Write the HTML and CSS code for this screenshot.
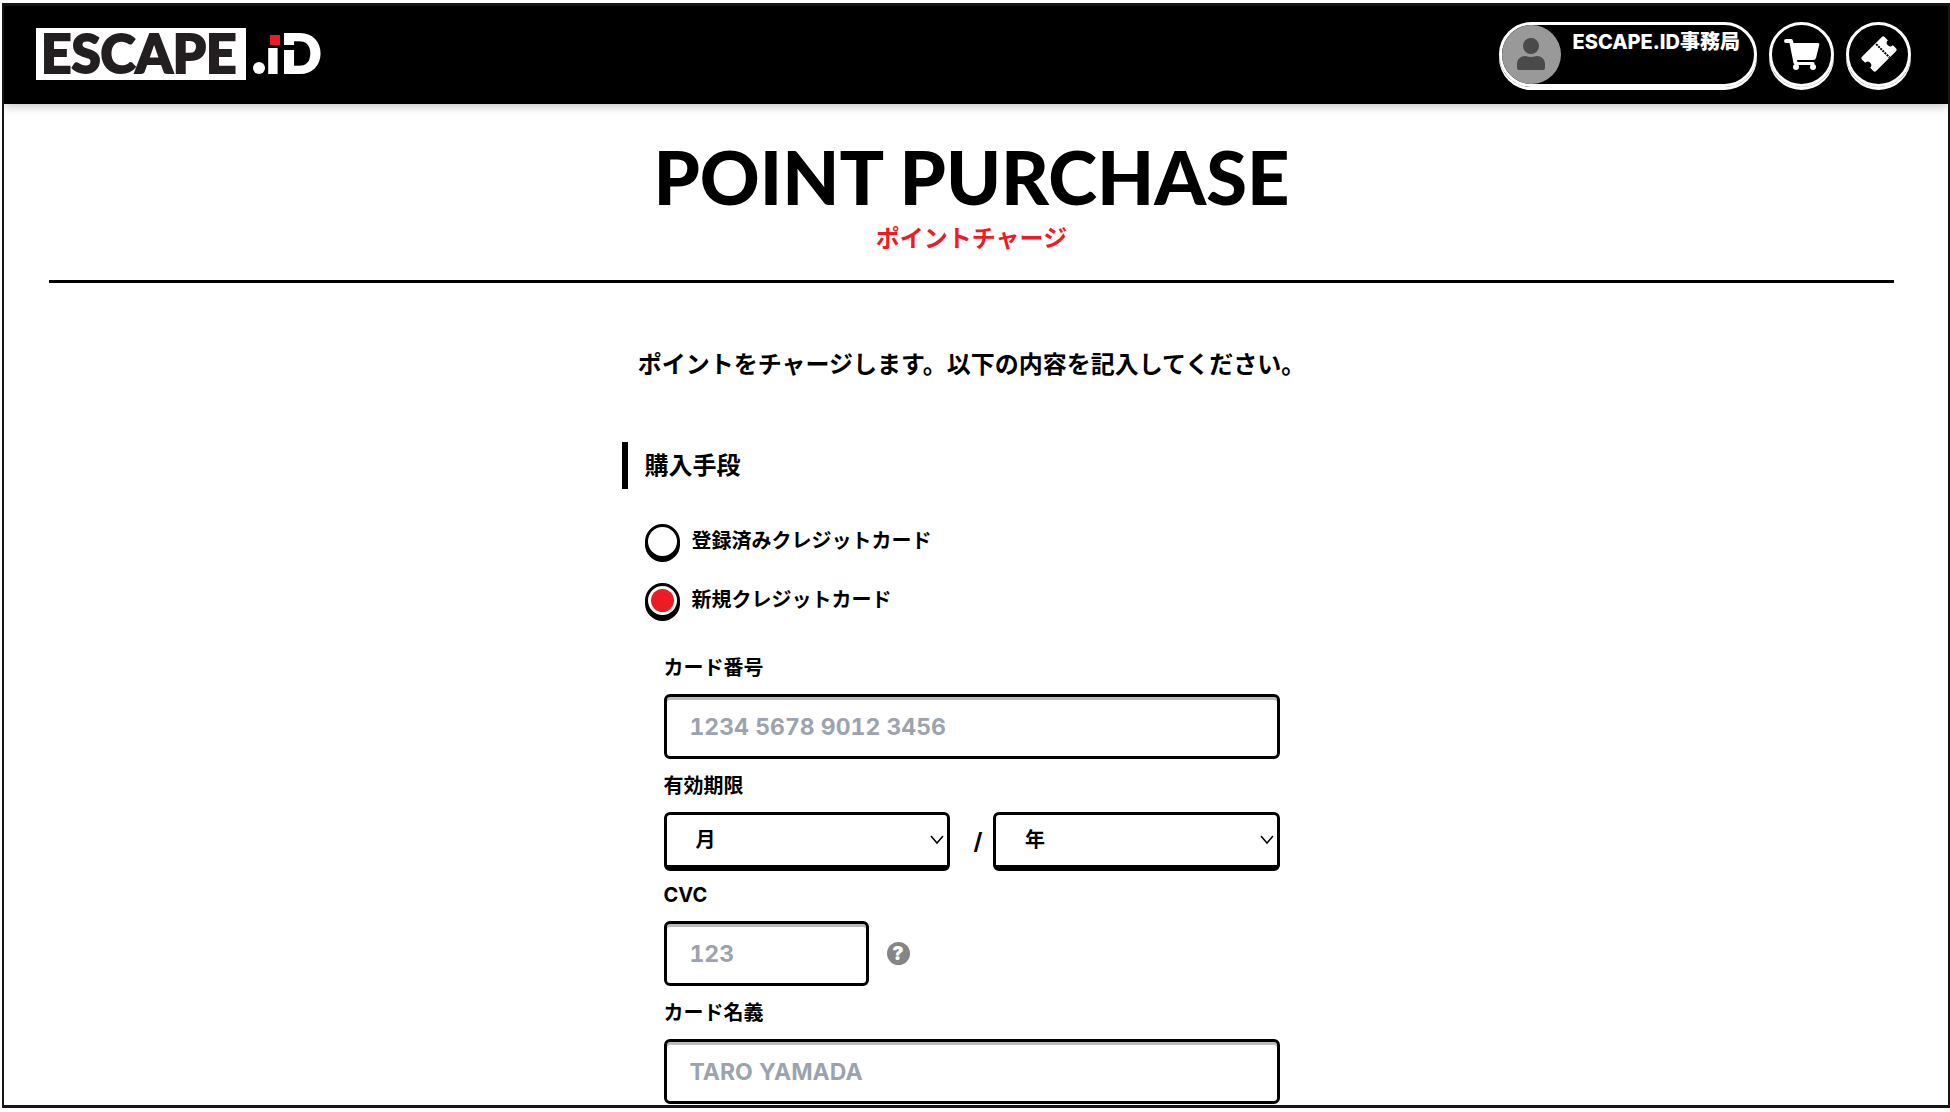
FILE: index.html
```html
<!DOCTYPE html>
<html lang="ja">
<head>
    <meta charset="UTF-8">
    <meta name="viewport" content="width=device-width, initial-scale=1.0">
    <title>POINT PURCHASE | ESCAPE.ID</title>
    <link rel="stylesheet" href="styles.css">
</head>
<body>
    <div class="frame">
        <header class="header">
            <a class="logo" href="#" aria-label="ESCAPE.iD">
                <svg width="300" height="52" viewBox="0 0 300 52">
                    <rect width="210" height="52" fill="#fff"/>
                    <text class="logo-name" x="5" y="45">ESCAPE</text>
                    <circle cx="223" cy="40" r="6" fill="#fff"/>
                    <text class="logo-id" x="230" y="45">i</text>
                    <text class="logo-id" x="245" y="45">D</text>
                    <rect x="230" y="2" width="17" height="18" fill="#000"/>
                    <rect x="234" y="7" width="10" height="10" fill="#ed1c24"/>
                    <rect x="246" y="17" width="14" height="5" fill="#000"/>
                </svg>
            </a>
            <nav class="nav">
                <a class="user" href="#">
                    <span class="avatar">
                        <svg width="30" height="34" viewBox="0 0 30 34" fill="#4a4a4a">
                            <circle cx="15" cy="9" r="8"/>
                            <path d="M1 33V27C1 22 5 19 9 19c2 0 3 1 6 1s4-1 6-1c4 0 8 3 8 8v4q0 2-2 2H3q-2 0-2-2z"/>
                        </svg>
                    </span>
                    <span class="user-name">ESCAPE.ID事務局</span>
                </a>
                <a class="round" href="#" aria-label="カート">
                    <svg width="36" height="33" viewBox="0 0 36 33" fill="#fff">
                        <path d="M2 1H7Q9 1 9 3L9.500 5H34Q36 5 35 8L32 20Q31.500 22 29 22H13L13.500 24H29Q31 24 30.500 26L30 27H12Q10 27 9.500 25L5.500 5H2Q0 5 0 3T2 1z"/>
                        <circle cx="12" cy="29" r="3"/>
                        <circle cx="29" cy="29" r="3"/>
                    </svg>
                </a>
                <a class="round" href="#" aria-label="チケット">
                    <svg width="36" height="36" viewBox="0 0 36 36">
                        <g transform="rotate(-45 18 18)">
                            <path fill="#fff" d="M4 8H32Q34 8 34 10V14.500A3.500 3.500 0 0 0 34 21.500V26Q34 28 32 28H4Q2 28 2 26V21.500A3.500 3.500 0 0 0 2 14.500V10Q2 8 4 8z"/>
                            <path d="M23 9V28" stroke="#000" stroke-width="2" stroke-dasharray="2 1"/>
                        </g>
                    </svg>
                </a>
            </nav>
        </header>

        <main class="main">
            <div class="page-title">
                <h1>POINT PURCHASE</h1>
                <p>ポイントチャージ</p>
            </div>

            <form class="form">
                <p class="lead">ポイントをチャージします。以下の内容を記入してください。</p>
                <h2>購入手段</h2>

                <div class="radios">
                    <label class="radio"><input type="radio" name="method" value="saved">登録済みクレジットカード</label>
                    <label class="radio"><input type="radio" name="method" value="new" checked>新規クレジットカード</label>
                </div>

                <div class="card">
                    <label class="label" for="number">カード番号</label>
                    <input class="input" type="text" id="number" placeholder="1234 5678 9012 3456">

                    <label class="label" for="month">有効期限</label>
                    <div class="expiry">
                        <div class="select">
                            <select id="month"><option>月</option></select>
                            <svg width="14" height="10" viewBox="0 0 14 10"><path d="M1 1l6 7 6-7" fill="none" stroke="#000" stroke-width="1.500"/></svg>
                        </div>
                        <span class="slash">/</span>
                        <div class="select">
                            <select id="year" aria-label="年"><option>年</option></select>
                            <svg width="14" height="10" viewBox="0 0 14 10"><path d="M1 1l6 7 6-7" fill="none" stroke="#000" stroke-width="1.500"/></svg>
                        </div>
                    </div>

                    <label class="label" for="cvc">CVC</label>
                    <div class="cvc">
                        <input class="input" type="text" id="cvc" placeholder="123">
                        <button class="help" type="button" aria-label="CVCとは">?</button>
                    </div>

                    <label class="label" for="holder">カード名義</label>
                    <input class="input" type="text" id="holder" placeholder="TARO YAMADA">
                </div>
            </form>
        </main>
    </div>
</body>
</html>
```
FILE: styles.css
```css
* {
    box-sizing: border-box;
}

body {
    margin: 0;
    padding: 3px 0 4px 2px;
    height: 100vh;
    background: #fff;
    color: #000;
    font-family: Inter, 'Noto Sans CJK JP', sans-serif;
    font-weight: 700;
}

h1, h2, p {
    margin: 0;
}

a {
    color: inherit;
    text-decoration: none;
}

.frame {
    height: 100%;
    border: 3px solid #141618;
    border-width: 3px 2px 3px 2px;
    overflow: hidden;
}

/* header */
.header {
    display: flex;
    align-items: center;
    justify-content: space-between;
    height: 98px;
    padding: 0 37px 2px 32px;
    background: #000;
    color: #fff;
    box-shadow: 0 2px 10px rgba(0, 0, 0, 0.25);
}

.logo svg {
    display: block;
    overflow: visible;
}

.logo-name,
.logo-id {
    font-family: Lato, sans-serif;
    font-weight: 900;
    font-size: 53px;
    stroke-width: 2px;
}

.logo-name {
    fill: #231f20;
    stroke: #231f20;
}

.logo-id {
    fill: #fff;
    stroke: #fff;
}

.nav {
    display: flex;
    gap: 12px;
}

.user,
.round {
    display: flex;
    height: 65px;
    border: 3px solid #fff;
    border-radius: 33px;
    box-shadow: 0 3px 0 #fff;
}

.user {
    gap: 12px;
    padding-right: 14px;
}

.avatar {
    display: flex;
    align-items: center;
    justify-content: center;
    width: 59px;
    height: 59px;
    border-radius: 50%;
    background: #999;
}

.user-name {
    padding-top: 2px;
    font-size: 20px;
    font-weight: 800;
    line-height: 30px;
}

.round {
    width: 65px;
    align-items: center;
    justify-content: center;
}

/* page title */
.main {
    padding: 0 54px 0 45px;
}

.page-title {
    padding: 31px 0 24px;
    border-bottom: 3px solid #000;
    text-align: center;
}

.page-title h1 {
    font-family: Lato, sans-serif;
    font-size: 74px;
    font-weight: 900;
    line-height: 84px;
}

.page-title p {
    padding-top: 2px;
    color: #ed1c24;
    font-size: 24px;
    line-height: 35px;
}

/* form */
.form {
    max-width: 700px;
    margin: 0 auto;
    padding-top: 64px;
}

.lead {
    font-size: 24px;
    line-height: 36px;
    text-align: center;
}

.form h2 {
    margin-top: 59px;
    padding-left: 17px;
    border-left: 6px solid #000;
    font-size: 24px;
    line-height: 47px;
}

.radios {
    display: flex;
    flex-direction: column;
    gap: 22px;
    padding: 34px 0 0 23px;
}

.radio {
    display: flex;
    align-items: center;
    gap: 12px;
    font-size: 20px;
    line-height: 37px;
}

.radio input {
    appearance: none;
    width: 35px;
    height: 35px;
    margin: 0;
    border: 3px solid #000;
    border-radius: 50%;
    background: #fff;
    box-shadow: 0 3px 0 #000;
}

.radio input:checked {
    background: #ed1c24;
    background-clip: content-box;
    padding: 3px;
}

.card {
    padding: 22px 42px 0;
}

.label {
    display: block;
    padding: 12px 0 11px;
    font-size: 20px;
    line-height: 30px;
}

.input {
    display: block;
    width: 100%;
    height: 65px;
    padding: 0 23px;
    border: 3px solid #000;
    border-radius: 6px;
    box-shadow: inset 0 3px 0 #bbb;
    font: inherit;
    font-size: 23px;
    font-variant-numeric: tabular-nums;
}

.input::placeholder {
    color: #9ca3af;
}

.expiry {
    display: flex;
    align-items: center;
}

.select {
    position: relative;
    flex: 1;
}

.select select {
    appearance: none;
    display: block;
    width: 100%;
    height: 59px;
    padding: 0 29px;
    border: 3px solid #000;
    border-bottom-width: 6px;
    border-radius: 6px;
    background: #fff;
    color: #000;
    font: inherit;
    font-size: 20px;
}

.select svg {
    position: absolute;
    top: 23px;
    right: 6px;
    pointer-events: none;
}

.slash {
    width: 43px;
    padding-left: 13px;
    font-size: 23px;
    text-align: center;
}

.cvc {
    display: flex;
    align-items: center;
    gap: 18px;
}

.cvc .input {
    width: 205px;
}

.expiry + .label {
    padding-top: 9px;
}

.help {
    width: 23px;
    height: 23px;
    padding: 0;
    border: none;
    border-radius: 50%;
    background: #858585;
    color: #fff;
    font: inherit;
    font-size: 19px;
    font-weight: 900;
    line-height: 23px;
}
```
